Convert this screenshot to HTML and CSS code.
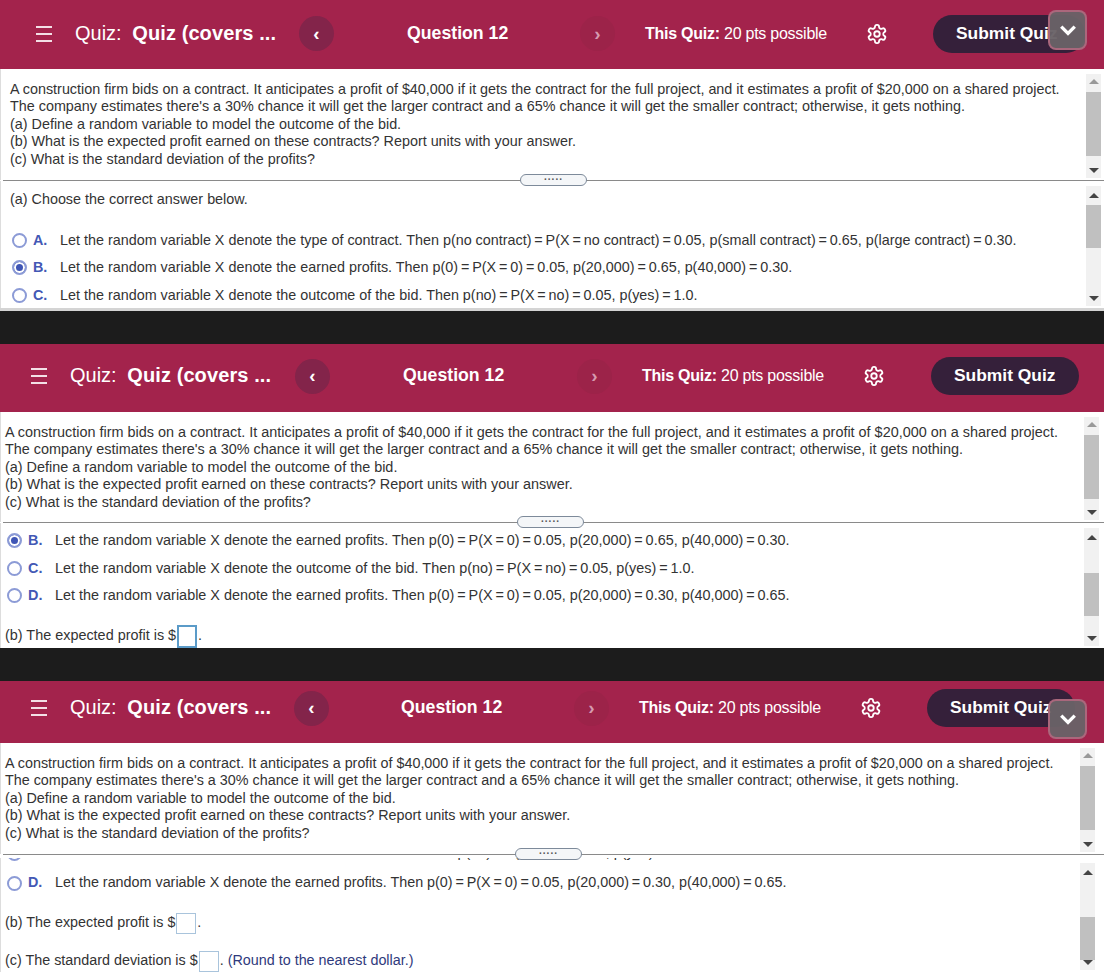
FILE: index.html
```html
<!DOCTYPE html>
<html>
<head>
    <title>Quiz - Question 12</title>
    <link rel="stylesheet" href="styles.css">
</head>
<body>
    <svg class="defs">
        <symbol id="gear" viewBox="0 0 24 24">
            <path d="M12.22 2h-.44a2 2 0 0 0-2 2v.18a2 2 0 0 1-1 1.73l-.43.25a2 2 0 0 1-2 0l-.15-.08a2 2 0 0 0-2.73.73l-.22.38a2 2 0 0 0 .73 2.73l.15.1a2 2 0 0 1 1 1.72v.51a2 2 0 0 1-1 1.74l-.15.09a2 2 0 0 0-.73 2.73l.22.38a2 2 0 0 0 2.73.73l.15-.08a2 2 0 0 1 2 0l.43.25a2 2 0 0 1 1 1.73V20a2 2 0 0 0 2 2h.44a2 2 0 0 0 2-2v-.18a2 2 0 0 1 1-1.73l.43-.25a2 2 0 0 1 2 0l.15.08a2 2 0 0 0 2.73-.73l.22-.39a2 2 0 0 0-.73-2.73l-.15-.08a2 2 0 0 1-1-1.74v-.5a2 2 0 0 1 1-1.74l.15-.09a2 2 0 0 0 .73-2.73l-.22-.38a2 2 0 0 0-2.73-.73l-.15.08a2 2 0 0 1-2 0l-.43-.25a2 2 0 0 1-1-1.73V4a2 2 0 0 0-2-2z"/>
            <circle cx="12" cy="12" r="3"/>
        </symbol>
        <symbol id="chevron" viewBox="0 0 16 10">
            <path d="M2 2l6 6 6-6"/>
        </symbol>
    </svg>

    <!-- first capture -->
    <section class="shot shot-1">
        <header class="topbar">
            <div class="burger"><span></span><span></span><span></span></div>
            <div class="title">Quiz: <strong>Quiz (covers ...</strong></div>
            <div class="nav nav-prev">&#8249;</div>
            <div class="question">Question 12</div>
            <div class="nav nav-next">&#8250;</div>
            <div class="score"><strong>This Quiz:</strong> 20 pts possible</div>
            <svg class="gear"><use href="#gear"/></svg>
            <div class="submit">Submit Quiz</div>
        </header>
        <div class="pane pane-problem">
            <div class="text">
                <p>A construction firm bids on a contract. It anticipates a profit of $40,000 if it gets the contract for the full project, and it estimates a profit of $20,000 on a shared project.</p>
                <p>The company estimates there's a 30% chance it will get the larger contract and a 65% chance it will get the smaller contract; otherwise, it gets nothing.</p>
                <p>(a) Define a random variable to model the outcome of the bid.</p>
                <p>(b) What is the expected profit earned on these contracts? Report units with your answer.</p>
                <p>(c) What is the standard deviation of the profits?</p>
            </div>
            <div class="scrollbar"><i class="arrow up"></i><b class="thumb"></b><i class="arrow down"></i></div>
        </div>
        <div class="divider"><div class="handle">.....</div></div>
        <div class="pane pane-answers">
            <div class="text">
                <p class="part part-a">(a) Choose the correct answer below.</p>
                <div class="choice"><span class="radio"></span><span class="letter">A.</span><span>Let the random variable X denote the type of contract. Then p(no contract)&thinsp;=&thinsp;P(X&thinsp;=&thinsp;no contract)&thinsp;=&thinsp;0.05, p(small contract)&thinsp;=&thinsp;0.65, p(large contract)&thinsp;=&thinsp;0.30.</span></div>
                <div class="choice"><span class="radio checked"></span><span class="letter">B.</span><span>Let the random variable X denote the earned profits. Then p(0)&thinsp;=&thinsp;P(X&thinsp;=&thinsp;0)&thinsp;=&thinsp;0.05, p(20,000)&thinsp;=&thinsp;0.65, p(40,000)&thinsp;=&thinsp;0.30.</span></div>
                <div class="choice"><span class="radio"></span><span class="letter">C.</span><span>Let the random variable X denote the outcome of the bid. Then p(no)&thinsp;=&thinsp;P(X&thinsp;=&thinsp;no)&thinsp;=&thinsp;0.05, p(yes)&thinsp;=&thinsp;1.0.</span></div>
            </div>
            <div class="scrollbar"><i class="arrow up"></i><b class="thumb"></b><i class="arrow down"></i></div>
        </div>
        <div class="floater"><svg><use href="#chevron"/></svg></div>
    </section>

    <!-- second capture -->
    <section class="shot shot-2">
        <header class="topbar">
            <div class="burger"><span></span><span></span><span></span></div>
            <div class="title">Quiz: <strong>Quiz (covers ...</strong></div>
            <div class="nav nav-prev">&#8249;</div>
            <div class="question">Question 12</div>
            <div class="nav nav-next">&#8250;</div>
            <div class="score"><strong>This Quiz:</strong> 20 pts possible</div>
            <svg class="gear"><use href="#gear"/></svg>
            <div class="submit">Submit Quiz</div>
        </header>
        <div class="pane pane-problem">
            <div class="text">
                <p>A construction firm bids on a contract. It anticipates a profit of $40,000 if it gets the contract for the full project, and it estimates a profit of $20,000 on a shared project.</p>
                <p>The company estimates there's a 30% chance it will get the larger contract and a 65% chance it will get the smaller contract; otherwise, it gets nothing.</p>
                <p>(a) Define a random variable to model the outcome of the bid.</p>
                <p>(b) What is the expected profit earned on these contracts? Report units with your answer.</p>
                <p>(c) What is the standard deviation of the profits?</p>
            </div>
            <div class="scrollbar"><i class="arrow up"></i><b class="thumb"></b><i class="arrow down"></i></div>
        </div>
        <div class="divider"><div class="handle">.....</div></div>
        <div class="pane pane-answers">
            <div class="text">
                <div class="choice"><span class="radio checked"></span><span class="letter">B.</span><span>Let the random variable X denote the earned profits. Then p(0)&thinsp;=&thinsp;P(X&thinsp;=&thinsp;0)&thinsp;=&thinsp;0.05, p(20,000)&thinsp;=&thinsp;0.65, p(40,000)&thinsp;=&thinsp;0.30.</span></div>
                <div class="choice"><span class="radio"></span><span class="letter">C.</span><span>Let the random variable X denote the outcome of the bid. Then p(no)&thinsp;=&thinsp;P(X&thinsp;=&thinsp;no)&thinsp;=&thinsp;0.05, p(yes)&thinsp;=&thinsp;1.0.</span></div>
                <div class="choice"><span class="radio"></span><span class="letter">D.</span><span>Let the random variable X denote the earned profits. Then p(0)&thinsp;=&thinsp;P(X&thinsp;=&thinsp;0)&thinsp;=&thinsp;0.05, p(20,000)&thinsp;=&thinsp;0.30, p(40,000)&thinsp;=&thinsp;0.65.</span></div>
                <p class="part part-b">(b) The expected profit is $<span class="blank focused"></span>.</p>
            </div>
            <div class="scrollbar"><i class="arrow up"></i><b class="thumb"></b><i class="arrow down"></i></div>
        </div>
    </section>

    <!-- third capture -->
    <section class="shot shot-3">
        <header class="topbar">
            <div class="burger"><span></span><span></span><span></span></div>
            <div class="title">Quiz: <strong>Quiz (covers ...</strong></div>
            <div class="nav nav-prev">&#8249;</div>
            <div class="question">Question 12</div>
            <div class="nav nav-next">&#8250;</div>
            <div class="score"><strong>This Quiz:</strong> 20 pts possible</div>
            <svg class="gear"><use href="#gear"/></svg>
            <div class="submit">Submit Quiz</div>
        </header>
        <div class="pane pane-problem">
            <div class="text">
                <p>A construction firm bids on a contract. It anticipates a profit of $40,000 if it gets the contract for the full project, and it estimates a profit of $20,000 on a shared project.</p>
                <p>The company estimates there's a 30% chance it will get the larger contract and a 65% chance it will get the smaller contract; otherwise, it gets nothing.</p>
                <p>(a) Define a random variable to model the outcome of the bid.</p>
                <p>(b) What is the expected profit earned on these contracts? Report units with your answer.</p>
                <p>(c) What is the standard deviation of the profits?</p>
            </div>
            <div class="scrollbar"><i class="arrow up"></i><b class="thumb"></b><i class="arrow down"></i></div>
        </div>
        <div class="divider"><div class="handle">.....</div></div>
        <div class="pane pane-answers">
            <div class="text">
                <div class="choice clipped"><span class="radio"></span><span class="letter">C.</span><span>Let the random variable X denote the outcome of the bid. Then p(no)&thinsp;=&thinsp;P(X&thinsp;=&thinsp;no)&thinsp;=&thinsp;0.05, p(yes)&thinsp;=&thinsp;1.0.</span></div>
                <div class="choice"><span class="radio"></span><span class="letter">D.</span><span>Let the random variable X denote the earned profits. Then p(0)&thinsp;=&thinsp;P(X&thinsp;=&thinsp;0)&thinsp;=&thinsp;0.05, p(20,000)&thinsp;=&thinsp;0.30, p(40,000)&thinsp;=&thinsp;0.65.</span></div>
                <p class="part part-b">(b) The expected profit is $<span class="blank"></span>.</p>
                <p class="part part-c">(c) The standard deviation is $<span class="blank"></span>. <span class="hint">(Round to the nearest dollar.)</span></p>
            </div>
            <div class="scrollbar"><i class="arrow up"></i><b class="thumb"></b><i class="arrow down"></i></div>
        </div>
        <div class="floater"><svg><use href="#chevron"/></svg></div>
    </section>
</body>
</html>
```

FILE: styles.css
```css
body {
    margin: 0;
    background: #1c1c1c;
    font-family: "Liberation Sans", Arial, sans-serif;
    line-height: 17.5px;
    color: #333;
    overflow: hidden;
}
p {
    margin: 0;
}
.defs {
    display: none;
}
.shot {
    position: relative;
    display: flex;
    flex-direction: column;
    margin-bottom: 33px;
    background: #fff;
    overflow: hidden;
    font-size: var(--fs);
}
.shot-1 {
    --fs: 14.37px;
    --head: 69px;
    --head-lift: 2px;
    --pad: 10px;
    --problem: 111px;
    --bar-right: 3px;
    --thumb-b: -1px;
    --handle-x: 520px;
    --cols: 39px 224px 108px 173px 65px 215px 73px 152px;
    --left: 36px;
    height: 308px;
    border-bottom: 3px solid #d4d4d4;
}
.shot-2 {
    --fs: 14.41px;
    --head: 68px;
    --head-lift: 4px;
    --pad: 5px;
    --problem: 110px;
    --bar-right: 5px;
    --thumb-b: 25px;
    --handle-x: 517px;
    --cols: 39px 225px 108px 174px 65px 215px 74px 148px;
    --left: 31px;
    height: 304px;
}
.shot-3 {
    --fs: 14.35px;
    --head: 62px;
    --head-lift: 8px;
    --pad: 5px;
    --problem: 111px;
    --bar-right: 9px;
    --thumb-b: 34px;
    --handle-x: 515px;
    --cols: 39px 224px 107px 173px 65px 215px 73px 148px;
    --left: 31px;
    height: 291px;
    margin-bottom: 0;
}

/* top bar */
.topbar {
    flex: none;
    height: var(--head);
    box-sizing: border-box;
    padding-left: var(--left);
    padding-bottom: var(--head-lift);
    display: grid;
    grid-template-columns: var(--cols);
    align-items: center;
    background: #a3234c;
    color: #fff;
}
.burger {
    display: flex;
    flex-direction: column;
    gap: 5px;
    width: 16px;
}
.burger span {
    height: 2px;
    background: #f3dfe6;
}
.title {
    font-size: 20px;
    white-space: nowrap;
}
.title strong {
    margin-left: 5px;
    letter-spacing: 0.1px;
}
.nav {
    width: 35px;
    height: 35px;
    border-radius: 50%;
    display: flex;
    align-items: center;
    justify-content: center;
    font-size: 19px;
    font-weight: bold;
    background: #83244a;
}
.nav-next {
    background: #9c2349;
    color: #d69ab0;
}
.question {
    font-size: 17.7px;
    font-weight: bold;
    white-space: nowrap;
}
.score {
    font-size: 16px;
    white-space: nowrap;
    letter-spacing: -0.25px;
}
.gear {
    width: 22px;
    height: 24px;
    margin-left: 6px;
    fill: none;
    stroke: #fff;
    stroke-width: 2;
}
.submit {
    height: 38px;
    border-radius: 19px;
    background: #35203a;
    font-size: 17.4px;
    font-weight: bold;
    line-height: 36px;
    padding-left: 23px;
    white-space: nowrap;
}
.floater {
    position: absolute;
    left: 1048px;
    top: 10px;
    box-sizing: border-box;
    width: 39px;
    height: 40px;
    border: 2px solid rgba(214, 110, 140, 0.6);
    border-radius: 8px;
    background: rgba(105, 98, 103, 0.96);
    display: flex;
    align-items: center;
    justify-content: center;
}
.shot-3 .floater {
    top: 18px;
}
.floater svg {
    width: 18px;
    height: 12px;
    fill: none;
    stroke: #fff;
    stroke-width: 3;
}

/* panes */
.pane {
    display: flex;
    justify-content: space-between;
    overflow: hidden;
    box-shadow: inset 1px 0 #ddd;
}
.pane-problem {
    flex: none;
    height: var(--problem);
}
.pane-problem .text {
    padding-top: 11.5px;
}
.pane-answers {
    flex: 1;
    min-height: 0;
}
.shot-3 .pane-answers {
    margin-top: 3px;
}
.text {
    padding-left: var(--pad);
    white-space: nowrap;
}
.scrollbar {
    flex: none;
    width: 15px;
    margin: 5px var(--bar-right) 2px 0;
    display: flex;
    flex-direction: column;
    align-items: center;
    background: #f1f1f1;
}
.thumb {
    width: 15px;
    background: #c0c0c0;
}
.pane-problem .thumb {
    margin-top: 8px;
    height: 64px;
}
.pane-answers .thumb {
    margin-top: calc(8px + var(--thumb-b));
    height: 43px;
}
.arrow {
    flex: none;
    width: 0;
    height: 0;
    border-left: 5px solid transparent;
    border-right: 5px solid transparent;
}
.arrow.up {
    margin-top: 5px;
    border-bottom: 5px solid #999;
}
.pane-answers .arrow.up {
    margin-top: 7px;
    border-bottom-color: #444;
}
.arrow.down {
    margin-top: auto;
    margin-bottom: 5px;
    border-top: 5px solid #444;
}

/* divider and its grip */
.divider {
    position: relative;
    flex: none;
    height: 1px;
    margin-left: 3px;
    background: #8a8a8a;
}
.handle {
    position: absolute;
    left: calc(var(--handle-x) - 3px);
    top: -6px;
    width: 65px;
    height: 10px;
    border: 1px solid #7d8a9a;
    border-radius: 6px;
    background: #f4f6f8;
    text-align: center;
    font-size: 10px;
    font-weight: bold;
    line-height: 4px;
    letter-spacing: 1px;
    color: #555;
}

/* answers */
.part-a {
    margin-top: 10px;
    margin-bottom: 23px;
}
.choice {
    display: flex;
    align-items: center;
    height: 17.5px;
    margin-bottom: 10px;
}
.choice .letter {
    width: 27px;
    margin-left: 6px;
    font-weight: bold;
    color: #4358b5;
}
.radio {
    box-sizing: border-box;
    width: 15px;
    height: 15px;
    margin-left: 2px;
    border: 2px solid #8c9bd6;
    border-radius: 50%;
    background: #fff;
}
.radio.checked {
    background: #3f55b5;
    box-shadow: inset 0 0 0 2px #fff;
}
.shot-2 .pane-answers .text {
    padding-top: 9px;
}
.clipped {
    margin-top: -13.75px;
    margin-bottom: 12.5px;
}
.part-b {
    margin-top: 20px;
}
.shot-3 .part-b {
    margin-top: 21px;
}
.part-c {
    margin-top: 17px;
}
.blank {
    display: inline-block;
    box-sizing: border-box;
    width: 20px;
    height: 21px;
    margin: 0 1px;
    vertical-align: middle;
    border: 1px solid #a9c4dc;
}
.blank.focused {
    height: 23px;
    border: 2px solid #5b9bc8;
}
.hint {
    color: #2f3a7c;
}
```
